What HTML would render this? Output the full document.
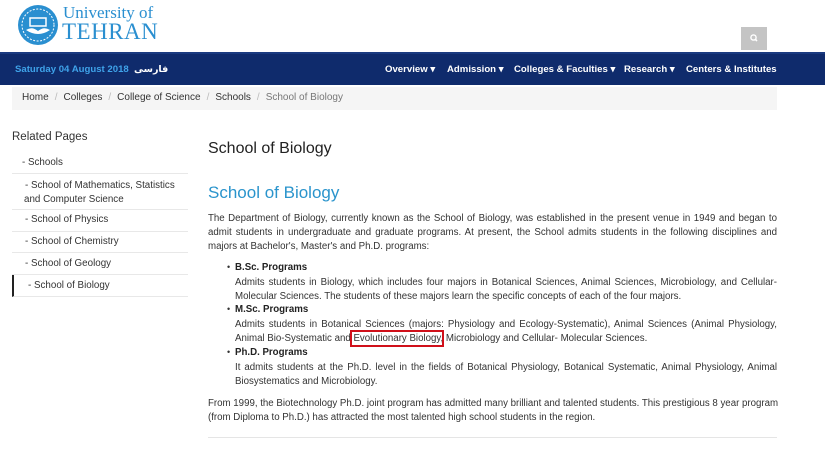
<!DOCTYPE html>
<html><head><meta charset="utf-8"><style>
*{margin:0;padding:0;box-sizing:border-box}
body{width:825px;height:454px;overflow:hidden;background:#fff;font-family:"Liberation Sans",sans-serif;color:#333;position:relative}
.abs{position:absolute}
.nav{top:52px;left:0;width:825px;height:33px;background:#0f2b6c;border-top:2px solid #1a3a80}
.nav span{position:absolute;top:10px;color:#fff;font-size:9.6px;font-weight:bold;white-space:nowrap}
.crumb{top:87px;left:12px;width:765px;height:23px;background:#f5f5f5;font-size:10px;color:#333;padding:5px 0 0 10px;white-space:nowrap}
.crumb i{font-style:normal;color:#bbb;margin:0 6px}
.side{left:12px;width:176px;font-size:9.8px;color:#333}
.side div{border-bottom:1px solid #e8e8e8;padding:0 0 0 13px}
p.t{font-size:9.7px;line-height:14.2px;text-align:justify;color:#333}
.bul{left:227px;font-size:9px}
.rb{outline:2px solid #d0101a;outline-offset:1px}
</style></head><body>
<svg class="abs" style="left:17px;top:4px" width="42" height="42" viewBox="0 0 42 42"><circle cx="21" cy="21" r="20" fill="#2a8fd0"/><circle cx="21" cy="21" r="16" fill="none" stroke="#fff" stroke-width="1" stroke-dasharray="2 1.5"/><path d="M9 26 Q21 34 33 26 Q27 22 21 27 Q15 22 9 26Z" fill="#fff"/><rect x="13" y="14" width="16" height="8" fill="none" stroke="#fff" stroke-width="1.5"/></svg>
<div class="abs" style="left:63px;top:4px;font-family:'Liberation Serif',serif;color:#2a8fd0;font-size:17px;line-height:18px">University of</div>
<div class="abs" style="left:62px;top:21px;font-family:'Liberation Serif',serif;color:#2a8fd0;font-size:23px;line-height:22px;letter-spacing:0.5px">TEHRAN</div>
<div class="abs" style="left:741px;top:27px;width:26px;height:23px;background:#c4c4c4"><svg width="26" height="23"><circle cx="12.5" cy="10.5" r="2.6" fill="none" stroke="#fff" stroke-width="1.4"/><path d="M14.3 12.3 L16 14" stroke="#fff" stroke-width="1.6"/></svg></div>
<div class="abs nav">
<span style="left:15px;color:#3fa3ea;font-weight:bold">Saturday 04 August 2018</span>
<span style="left:134px;font-family:'DejaVu Sans',sans-serif;font-size:9.5px">فارسی</span>
<span style="left:385px">Overview ▾</span>
<span style="left:447px">Admission ▾</span>
<span style="left:514px">Colleges &amp; Faculties ▾</span>
<span style="left:624px">Research ▾</span>
<span style="left:686px">Centers &amp; Institutes</span>
</div>
<div class="abs crumb">Home<i>/</i>Colleges<i>/</i>College of Science<i>/</i>Schools<i>/</i><span style="color:#777">School of Biology</span></div>
<div class="abs" style="left:12px;top:131px;font-size:11.5px;color:#333">Related Pages</div>
<div class="abs side" style="top:152px">
<div style="height:22px;padding-top:5px;padding-left:10px">- Schools</div>
<div style="height:36px;padding-top:5px;line-height:14px">- School of Mathematics, Statistics<br><span style="margin-left:-1px">and Computer Science</span></div>
<div style="height:22px;padding-top:4px">- School of Physics</div>
<div style="height:21px;padding-top:4px">- School of Chemistry</div>
<div style="height:22px;padding-top:5px">- School of Geology</div>
<div style="height:22px;padding-top:5px;border-left:2px solid #222;padding-left:14px">- School of Biology</div>
</div>
<div class="abs" style="left:208px;top:140px;font-size:16px;color:#222">School of Biology</div>
<div class="abs" style="left:208px;top:183px;font-size:17px;color:#2a94cc">School of Biology</div>
<p class="abs t" style="left:208px;top:212px;width:569px">The Department of Biology, currently known as the School of Biology, was established in the present venue in 1949 and began to admit students in undergraduate and graduate programs. At present, the School admits students in the following disciplines and majors at Bachelor's, Master's and Ph.D. programs:</p>
<div class="abs bul" style="top:262px">•</div><div class="abs bul" style="top:304px">•</div><div class="abs bul" style="top:347px">•</div>
<div class="abs" style="left:235px;top:262px;font-size:9.7px;font-weight:bold;color:#222">B.Sc. Programs</div>
<p class="abs t" style="left:235px;top:276px;width:542px">Admits students in Biology, which includes four majors in Botanical Sciences, Animal Sciences, Microbiology, and Cellular-Molecular Sciences. The students of these majors learn the specific concepts of each of the four majors.</p>
<div class="abs" style="left:235px;top:304px;font-size:9.7px;font-weight:bold;color:#222">M.Sc. Programs</div>
<p class="abs t" style="left:235px;top:318px;width:542px">Admits students in Botanical Sciences (majors: Physiology and Ecology-Systematic), Animal Sciences (Animal Physiology, Animal Bio-Systematic and <span class="rb">Evolutionary Biology</span>, Microbiology and Cellular- Molecular Sciences.</p>
<div class="abs" style="left:235px;top:347px;font-size:9.7px;font-weight:bold;color:#222">Ph.D. Programs</div>
<p class="abs t" style="left:235px;top:361px;width:542px">It admits students at the Ph.D. level in the fields of Botanical Physiology, Botanical Systematic, Animal Physiology, Animal Biosystematics and Microbiology.</p>
<p class="abs t" style="left:208px;top:397px;width:575px;text-align:left">From 1999, the Biotechnology Ph.D. joint program has admitted many brilliant and talented students. This prestigious 8 year program (from Diploma to Ph.D.) has attracted the most talented high school students in the region.</p>
<div class="abs" style="left:208px;top:437px;width:569px;height:1px;background:#e5e5e5"></div>
</body></html>
